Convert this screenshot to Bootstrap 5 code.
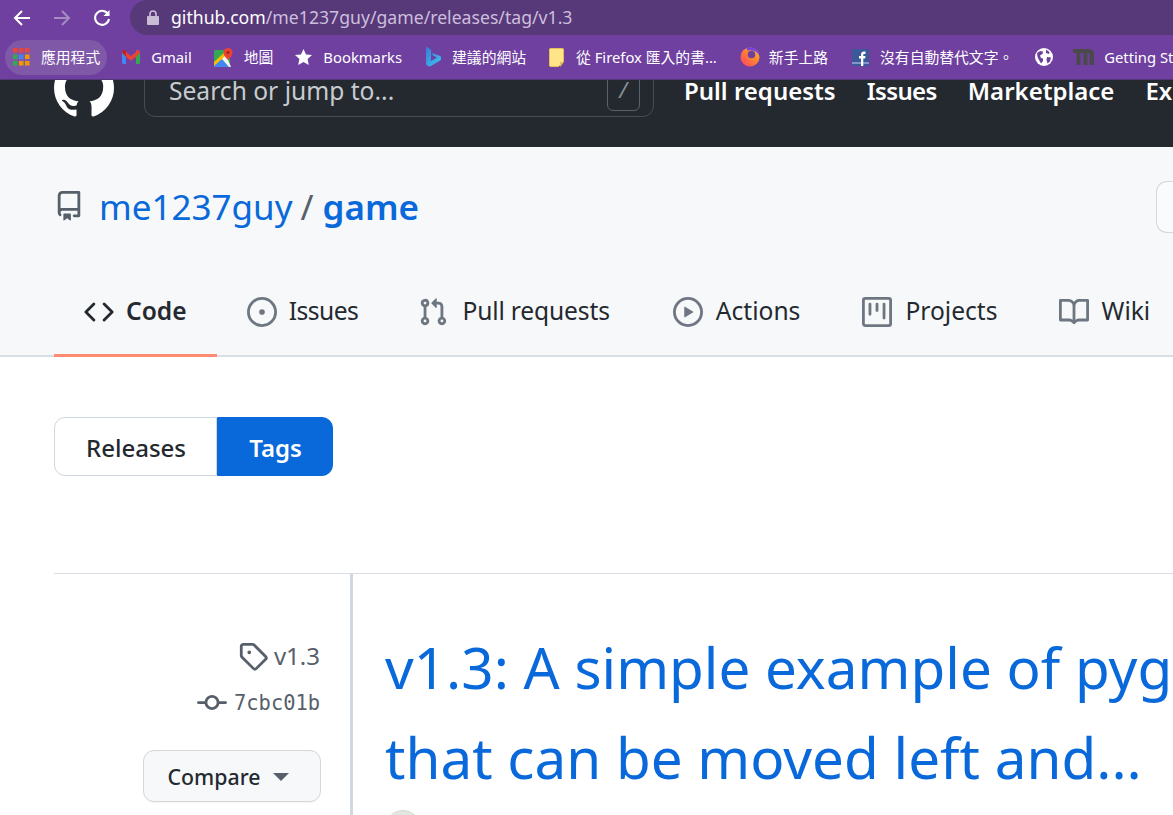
<!DOCTYPE html>
<html lang="zh-Hant">
<head>
<meta charset="utf-8">
<title>v1.3 - me1237guy/game</title>
<link href="https://cdn.jsdelivr.net/npm/bootstrap@5.3.0/dist/css/bootstrap.min.css" rel="stylesheet">
<style>
html,body{height:815px;overflow:hidden;background:#fff}
body{width:1173px;font-family:"Noto Sans","Noto Sans CJK TC",sans-serif;color:#24292f}
svg{fill-rule:evenodd}
.omni{height:35px;background:#6f409f;position:relative;padding-left:13px}
.tool-ic{flex:none;width:18px;height:18px}
.tool-ic + .tool-ic{margin-left:22px}
.addr{margin-left:19px;flex:1;height:35px;background:#57397a;border-radius:18px 0 0 18px;padding-left:17px;font-size:17.65px;color:#cdbfdc;white-space:nowrap}
.addr b{font-weight:400;color:#fff}
.bmbar{height:45px;background:#6f409f;border-bottom:1px solid #553578;padding-left:5px;overflow:hidden;white-space:nowrap;font-size:14.8px;color:#fff}
.bm{flex:none;height:35px;padding:0 7px;margin-right:8px;border-radius:18px}
.bm svg{flex:none;margin-right:11px}
.bm.sel{background:#7f58a8;margin-right:8px}
.bm.bk{margin-right:10px}
.bm.bn,.bm.fo{margin-right:9px}
.bm.ff{margin-right:10px}
.bm.ff svg{margin-right:9px}
.bm.gl svg{margin-right:0}
.bm.gl{margin-right:6px}
.bm.mm svg{margin-right:10px}
.gh{height:67px;background:#24292f;overflow:hidden;padding:0 0 30px 54px;white-space:nowrap;color:#fff}
.logo{flex:none;width:60px;height:60px;fill:#fff;margin-bottom:-1px}
.srch{flex:none;width:510px;height:50px;margin-left:30px;border:1.5px solid #444d56;border-radius:11px;padding:0 13px 2px 24px;font-size:24.6px;color:#c8ccd0}
.slash{width:33px;height:38px;border:1.5px solid #5a6269;border-radius:6px;margin-left:auto;margin-top:2px;font-size:22px;color:#8a9096;font-family:"Liberation Mono",monospace}
.gh-link{flex:none;font-size:24px;font-weight:600;color:#fff;text-decoration:none;margin-left:31px;line-height:52px}
.gh-link.tight{letter-spacing:-.6px}
.srch + .gh-link{margin-left:30px}
.rh{height:210px;background:#f6f8fa;border-bottom:2px solid #d8dee4;padding-left:54px;position:relative}
.rtitle{height:120px;padding:34px 0;font-size:35px;line-height:52px;color:#57606a}
.rtitle a{color:#0969da;text-decoration:none}
.rtitle svg{width:30px;height:30px;fill:#57606a;margin-right:15px;flex:none;margin-top:-2px}
.sep{margin:0 9px 0 8px}
.rbtn{position:absolute;right:0;top:34px;width:17px;height:52px;border:1.5px solid #d5d8db;border-right:0;border-radius:11px 0 0 11px;background:#fafbfc}
.tabs{white-space:nowrap;overflow:hidden;height:90px;margin-bottom:-2px}
.tb{flex:none;height:90px;padding:2px 30px 0;font-size:24.6px;color:#24292f;text-decoration:none;border-bottom:3.75px solid transparent}
.tb svg{width:30px;height:30px;fill:#6e7781;margin-right:12px;flex:none}
.tb.on{border-bottom-color:#fd8c73;font-weight:600}
.tb.on svg{fill:#24292f}
.tb.t-issues{letter-spacing:-.5px}
.tb.t-pr{letter-spacing:-.15px}
.tb.t-pr svg{margin-right:14px}
.tb.t-act{margin-left:3px}
.tb.t-act svg,.tb.t-proj svg,.tb.t-wiki svg{margin-right:13px}
.tb.t-proj{margin-left:2px}
.tb.t-wiki{margin-left:1px}
.pg{padding-left:54px}
.swi{margin-top:60px;width:279px}
.swi .sw{height:59px;font-size:24px;font-weight:500;line-height:1;display:flex;align-items:center;justify-content:center;border:1.5px solid #d0d7de;background:#fff;color:#24292f;border-radius:11px 0 0 11px;padding:3px 0 0 1px;width:163px;text-decoration:none}
.swi .sw.act{width:116px;background:#0969da;border-color:#0969da;color:#fff;font-weight:600;border-radius:0 11px 11px 0;margin:0}
.rule{margin-top:97px;border-top:1.5px solid #d8dee4;height:242px}
.side{flex:none;width:299px;border-right:3.5px solid #d0d7de;height:242px;padding:66px 30px 0 0;color:#57606a}
.sd-tag{height:32px;font-size:24px;line-height:32px}
.sd-tag svg{width:30px;height:30px;fill:#57606a;margin-right:6px}
.sd-com{margin-top:15px;height:32px;font-family:"DejaVu Sans Mono","Liberation Mono",monospace;font-size:20.4px}
.sd-com svg{width:30px;height:30px;fill:#57606a;margin-right:7px}
.cmp{margin-top:31px;width:178px;height:52px;margin-left:auto;margin-right:-1px;background:#f6f8fa;border:1.5px solid #d5d8db;border-radius:11px;font-size:21.3px;font-weight:500;color:#24292f;box-shadow:0 1px 0 rgba(27,31,35,.04)}
.cmp.btn{padding:2px 7px 0 0}
.caret{display:inline-block;width:0;height:0;border:8px solid transparent;border-top-color:#57606a;border-bottom:0;margin-left:13px}
.relmain{padding-left:32px;white-space:nowrap;overflow:hidden;position:relative;flex:1;min-width:0}
.rel-t{font-size:56.6px;line-height:90px;color:#0969da;padding-top:48px;text-decoration:none;display:block}
.rel-t span{display:block}
.ava{width:36px;height:36px;border-radius:50%;background:#e4e6e2;border:1.5px solid #d8dbd5;margin-top:8px}
</style>
</head>
<body>
<div class="omni d-flex align-items-center">
  <svg class="tool-ic" viewBox="0 0 18 18" fill="none" stroke="#fff" stroke-width="2"><path d="M17 9H2M9 2 2 9l7 7"/></svg>
  <svg class="tool-ic" viewBox="0 0 18 18" fill="none" stroke="#a78cc4" stroke-width="2"><path d="M1 9h15M9 2l7 7-7 7"/></svg>
  <svg class="tool-ic" viewBox="0 0 18 18" fill="none" stroke="#fff" stroke-width="2"><path d="M15.500 6A7 7 0 1 0 16 10"/><path d="M16.500 1v6h-6" fill="#fff" stroke="none"/></svg>
  <div class="addr d-flex align-items-center">
    <svg width="12" height="15" viewBox="0 0 12 15" class="me-2 flex-none"><path fill="#c9bdd6" d="M1 6h10a1 1 0 0 1 1 1v7a1 1 0 0 1-1 1H1a1 1 0 0 1-1-1V7a1 1 0 0 1 1-1z"/><path fill="none" stroke="#c9bdd6" stroke-width="1.600" d="M3 6V4a3 3 0 0 1 6 0v2"/></svg>
    <span class="ms-1"><b>github.com</b>/me1237guy/game/releases/tag/v1.3</span>
  </div>
</div>
<div class="bmbar d-flex align-items-center">
  <div class="bm sel d-flex align-items-center">
    <svg width="18" height="18" viewBox="0 0 18 18"><path fill="#e8453c" d="M1 0h4.500v4.500H1zM7 0h4.500v4.500H7zM13 0h4.500v4.500H13z"/><path fill="#34a853" d="M1 6.500h4.500V11H1zM1 13h4.500v4.500H1z"/><path fill="#4285f4" d="M7 6.500h4.500V11H7z"/><path fill="#f29900" d="M13 6.500h4.500V11H13zM7 13h4.500v4.500H7zM13 13h4.500v4.500H13z"/></svg>
    <span>應用程式</span>
  </div>
  <div class="bm d-flex align-items-center">
    <svg width="18" height="14" viewBox="0 0 18 14"><path fill="#4285f4" d="M0 2v10.500A1.500 1.500 0 0 0 1.500 14H4V6z"/><path fill="#34a853" d="M14 6v8h2.500a1.500 1.500 0 0 0 1.500-1.500V2z"/><path fill="#ea4335" d="M4 7V2L9 6l5-4v5L9 10.500z"/><path fill="#c5221f" d="M0 2.500C0 .5 2.300-.6 3.800.6L4 2v5z"/><path fill="#ea4335" d="M14 2l.2-1.400C15.700-.6 18 .5 18 2.500L14 7z"/></svg>
    <span>Gmail</span>
  </div>
  <div class="bm d-flex align-items-center">
    <svg width="19" height="19" viewBox="0 0 19 19"><rect y="2" width="16" height="17" rx="1.500" fill="#34a853"/><path fill="#4285f4" d="M0 19v-2l8-6 7 8z"/><path fill="#fbbc05" d="M0 14 12 3l3 8-7 0-8 7z"/><path fill="#f4f4f4" d="M8 11l4-4 5 12h-2z"/><path fill="#ea4335" d="M14 0a4.500 4.500 0 0 1 4.500 4.500C18.500 8 14 12 14 12S9.500 8 9.500 4.500A4.500 4.500 0 0 1 14 0z"/><circle cx="14" cy="4.500" r="1.600" fill="#a52714"/></svg>
    <span>地圖</span>
  </div>
  <div class="bm bk d-flex align-items-center">
    <svg width="17" height="16" viewBox="0 0 17 16"><path fill="#fff" d="M8.500 0l2.500 5.400 6 .7-4.400 4 1.200 5.900-5.300-3-5.300 3 1.200-5.900L0 6.100l6-.7z"/></svg>
    <span>Bookmarks</span>
  </div>
  <div class="bm bn d-flex align-items-center">
    <svg width="15" height="20" viewBox="0 0 15 20"><defs><linearGradient id="bng" x1="0" y1="0" x2="1" y2="1"><stop offset="0" stop-color="#3a7bd5"/><stop offset="1" stop-color="#39c8f0"/></linearGradient></defs><path fill="url(#bng)" d="M0 1c0-1 .8-1.300 1.500-.8L5 3v11l6-3.500L7 8.500 6 6l8 3c.7.300 1 .8 1 1.500V12c0 .7-.3 1.200-1 1.600L5 19c-1 .6-2 .6-3 0l-1-.8C.3 17.700 0 17 0 16z"/></svg>
    <span>建議的網站</span>
  </div>
  <div class="bm fo d-flex align-items-center">
    <svg width="16" height="19" viewBox="0 0 16 19"><path fill="#ffe48a" stroke="#e8bf55" d="M1.500.5h12a1 1 0 0 1 1 1v12l-5 5h-8a1 1 0 0 1-1-1v-16a1 1 0 0 1 1-1z"/><path fill="#e8bf55" d="M11 14h4l-4 5z"/></svg>
    <span>從 Firefox 匯入的書...</span>
  </div>
  <div class="bm ff d-flex align-items-center">
    <svg width="20" height="20" viewBox="0 0 20 20"><defs><linearGradient id="fxg" x1="0" y1="1" x2="1" y2="0"><stop offset="0" stop-color="#ff3d6b"/><stop offset=".6" stop-color="#ff8a2b"/><stop offset="1" stop-color="#ffbd2e"/></linearGradient></defs><circle cx="10" cy="10" r="9.500" fill="url(#fxg)"/><path fill="#7542e5" d="M7 .8A9.500 9.500 0 0 1 19.500 10C19 6 15 2.500 7 3.500z"/><circle cx="11.500" cy="7.500" r="3.800" fill="#6f409f"/></svg>
    <span>新手上路</span>
  </div>
  <div class="bm d-flex align-items-center">
    <svg width="17" height="17" viewBox="0 0 17 17"><rect width="17" height="17" rx="1.500" fill="#3b5998"/><rect y="13" width="17" height="2" fill="#7f97c9"/><path fill="#fff" d="M9 17V9.500H7V7h2V5.500C9 3.500 10 2.500 12 2.500h1.500V5H12.300c-.8 0-1 .3-1 1V7h2.200l-.3 2.500h-1.900V17z"/></svg>
    <span>沒有自動替代文字。</span>
  </div>
  <div class="bm gl d-flex align-items-center">
    <svg width="18" height="18" viewBox="0 0 18 18"><circle cx="9" cy="9" r="9" fill="#fff"/><path fill="#6f409f" d="M2 5l3-2 3 .5L7.500 6 5 7.500 6 10l2 .5V13l-2 2.500L4 12 2.500 9zM11 1.500l3.500 2.500-.5 2-3-1zM12 9l4 .5-1 4-2.500 2L11.500 12z"/></svg>
  </div>
  <div class="bm mm d-flex align-items-center">
    <svg width="21" height="16" viewBox="0 0 21 16"><path fill="#4a4a4a" d="M0 0h16a5 5 0 0 1 5 5v11h-4.500V5.500A1.500 1.500 0 0 0 15 4h-.5v12h-4V4h-3v12h-4V4H0z"/></svg>
    <span>Getting Started</span>
  </div>
</div>

<header class="gh d-flex align-items-end">
  <svg class="logo" viewBox="0 0 16 16"><path d="M8 0C3.580 0 0 3.580 0 8c0 3.540 2.290 6.530 5.470 7.590.4.070.55-.17.55-.38 0-.19-.01-.82-.01-1.490-2.010.37-2.530-.49-2.690-.94-.09-.23-.48-.94-.82-1.130-.28-.15-.68-.52-.01-.53.63-.01 1.080.58 1.230.82.720 1.210 1.870.87 2.330.66.070-.52.28-.87.51-1.070-1.780-.2-3.640-.89-3.640-3.950 0-.87.31-1.590.82-2.150-.08-.2-.36-1.020.08-2.120 0 0 .67-.21 2.200.82.64-.18 1.320-.27 2-.27.68 0 1.360.09 2 .27 1.530-1.040 2.200-.82 2.200-.82.44 1.100.16 1.920.08 2.120.51.56.82 1.270.82 2.150 0 3.070-1.870 3.750-3.650 3.950.29.25.54.73.54 1.480 0 1.070-.01 1.930-.01 2.200 0 .21.15.46.55.38A8.013 8.013 0 0016 8c0-4.420-3.580-8-8-8z"/></svg>
  <div class="srch d-flex align-items-center"><span>Search or jump to...</span><span class="slash d-flex align-items-center justify-content-center">/</span></div>
  <a class="gh-link" href="#">Pull requests</a>
  <a class="gh-link tight" href="#">Issues</a>
  <a class="gh-link" href="#">Marketplace</a>
  <a class="gh-link" href="#">Explore</a>
</header>

<section class="rh">
  <div class="rtitle d-flex align-items-center">
    <svg viewBox="0 0 16 16"><path d="M2 2.500A2.500 2.500 0 014.500 0h8.750a.75.75 0 01.75.75v12.500a.75.75 0 01-.75.75h-2.500a.75.75 0 110-1.500h1.750v-2h-8a1 1 0 00-.714 1.700.75.75 0 01-1.072 1.050A2.495 2.495 0 012 11.500v-9zm10.500-1V9h-8c-.356 0-.694.074-1 .208V2.500a1 1 0 011-1h8zM5 12.250v3.250a.25.25 0 00.4.2l1.450-1.087a.25.25 0 01.3 0L8.600 15.700a.25.25 0 00.4-.2v-3.250a.25.25 0 00-.25-.25h-3.500a.25.25 0 00-.25.25z"/></svg>
    <a href="#">me1237guy</a><span class="sep">/</span><a href="#" class="fw-semibold">game</a>
  </div>
  <div class="rbtn"></div>
  <nav class="tabs d-flex">
    <a class="tb on d-flex align-items-center" href="#"><svg viewBox="0 0 16 16"><path d="M4.720 3.220a.75.75 0 011.060 1.060L2.060 8l3.720 3.720a.75.75 0 11-1.060 1.060L.47 8.530a.75.75 0 010-1.060l4.250-4.250zm6.560 0a.75.75 0 10-1.060 1.060L13.940 8l-3.720 3.720a.75.75 0 101.060 1.060l4.250-4.250a.75.75 0 000-1.060l-4.250-4.250z"/></svg>Code</a>
    <a class="tb t-issues d-flex align-items-center" href="#"><svg viewBox="0 0 16 16"><path d="M8 9.500a1.500 1.500 0 100-3 1.500 1.500 0 000 3z"/><path d="M8 0a8 8 0 100 16A8 8 0 008 0zM1.500 8a6.500 6.500 0 1113 0 6.500 6.500 0 01-13 0z"/></svg>Issues</a>
    <a class="tb t-pr d-flex align-items-center" href="#"><svg viewBox="0 0 16 16"><path d="M7.177 3.073L9.573.677A.25.25 0 0110 .854v4.792a.25.25 0 01-.427.177L7.177 3.427a.25.25 0 010-.354zM3.750 2.500a.75.75 0 100 1.500.75.75 0 000-1.500zm-2.250.75a2.250 2.250 0 113 2.122v5.256a2.251 2.251 0 11-1.500 0V5.372A2.250 2.250 0 011.500 3.250zM11 2.500h-1V4h1a1 1 0 011 1v5.628a2.251 2.251 0 101.500 0V5A2.500 2.500 0 0011 2.500zm1 10.250a.75.75 0 111.500 0 .75.75 0 01-1.500 0zM3.750 12a.75.75 0 100 1.500.75.75 0 000-1.500z"/></svg>Pull requests</a>
    <a class="tb t-act d-flex align-items-center" href="#"><svg viewBox="0 0 16 16"><path d="M1.500 8a6.500 6.500 0 1113 0 6.500 6.500 0 01-13 0zM8 0a8 8 0 100 16A8 8 0 008 0zM6.379 5.227A.25.25 0 006 5.442v5.117a.25.25 0 00.379.214l4.264-2.559a.25.25 0 000-.428L6.379 5.227z"/></svg>Actions</a>
    <a class="tb t-proj d-flex align-items-center" href="#"><svg viewBox="0 0 16 16"><path d="M1.750 0A1.750 1.750 0 000 1.750v12.500C0 15.216.784 16 1.750 16h12.500A1.750 1.750 0 0016 14.250V1.750A1.750 1.750 0 0014.250 0H1.750zM1.500 1.750a.25.25 0 01.25-.25h12.500a.25.25 0 01.25.25v12.500a.25.25 0 01-.25.25H1.750a.25.25 0 01-.25-.25V1.750zM11.750 3a.75.75 0 00-.75.75v7.500a.75.75 0 001.500 0v-7.500a.75.75 0 00-.75-.75zm-8.250.75a.75.75 0 011.500 0v5.500a.75.75 0 01-1.500 0v-5.500zM8 3a.75.75 0 00-.75.75v3.500a.75.75 0 001.500 0v-3.500A.75.75 0 008 3z"/></svg>Projects</a>
    <a class="tb t-wiki d-flex align-items-center" href="#"><svg viewBox="0 0 16 16"><path d="M0 1.750A.75.75 0 01.75 1h4.253c1.227 0 2.317.59 3 1.501A3.744 3.744 0 0111.006 1h4.245a.75.75 0 01.75.75v10.500a.75.75 0 01-.75.75h-4.507a2.250 2.250 0 00-1.591.659l-.622.621a.75.75 0 01-1.060 0l-.622-.621A2.250 2.250 0 005.258 13H.75a.75.75 0 01-.75-.75V1.750zm8.755 3a2.250 2.250 0 012.250-2.250H14.500v9h-3.757c-.71 0-1.400.201-1.992.572l.004-7.322zm-1.504 7.324l.004-5.073-.002-2.253A2.250 2.250 0 005.003 2.500H1.500v9h3.757a3.750 3.750 0 011.994.574z"/></svg>Wiki</a>
  </nav>
</section>

<main class="pg">
  <div class="swi d-flex">
    <a class="sw" href="#">Releases</a>
    <a class="sw act" href="#">Tags</a>
  </div>
  <div class="rule d-flex">
    <aside class="side text-end">
      <div class="sd-tag d-flex align-items-center justify-content-end"><svg viewBox="0 0 16 16"><path d="M2.500 7.775V2.750a.25.25 0 01.25-.25h5.025a.25.25 0 01.177.073l6.250 6.250a.25.25 0 010 .354l-5.025 5.025a.25.25 0 01-.354 0l-6.250-6.250a.25.25 0 01-.073-.177zm-1.500 0V2.750C1 1.784 1.784 1 2.750 1h5.025c.464 0 .91.184 1.238.513l6.250 6.250a1.750 1.750 0 010 2.474l-5.026 5.026a1.750 1.750 0 01-2.474 0l-6.250-6.250A1.750 1.750 0 011 7.775zM6 5a1 1 0 100 2 1 1 0 000-2z"/></svg>v1.3</div>
      <div class="sd-com d-flex align-items-center justify-content-end"><svg viewBox="0 0 16 16"><path d="M10.500 7.750a2.500 2.500 0 11-5 0 2.500 2.500 0 015 0zm1.430.75a4.002 4.002 0 01-7.860 0H.75a.75.75 0 110-1.500h3.320a4.001 4.001 0 017.860 0h3.320a.75.75 0 110 1.500h-3.320z"/></svg>7cbc01b</div>
      <button type="button" class="cmp btn d-flex align-items-center justify-content-center">Compare<span class="caret"></span></button>
    </aside>
    <div class="relmain">
      <a class="rel-t" href="#"><span>v1.3: A simple example of pygame</span><span>that can be moved left and...</span></a>
      <div class="ava"></div>
    </div>
  </div>
</main>
<script src="https://cdn.jsdelivr.net/npm/bootstrap@5.3.0/dist/js/bootstrap.bundle.min.js"></script>
</body>
</html>
